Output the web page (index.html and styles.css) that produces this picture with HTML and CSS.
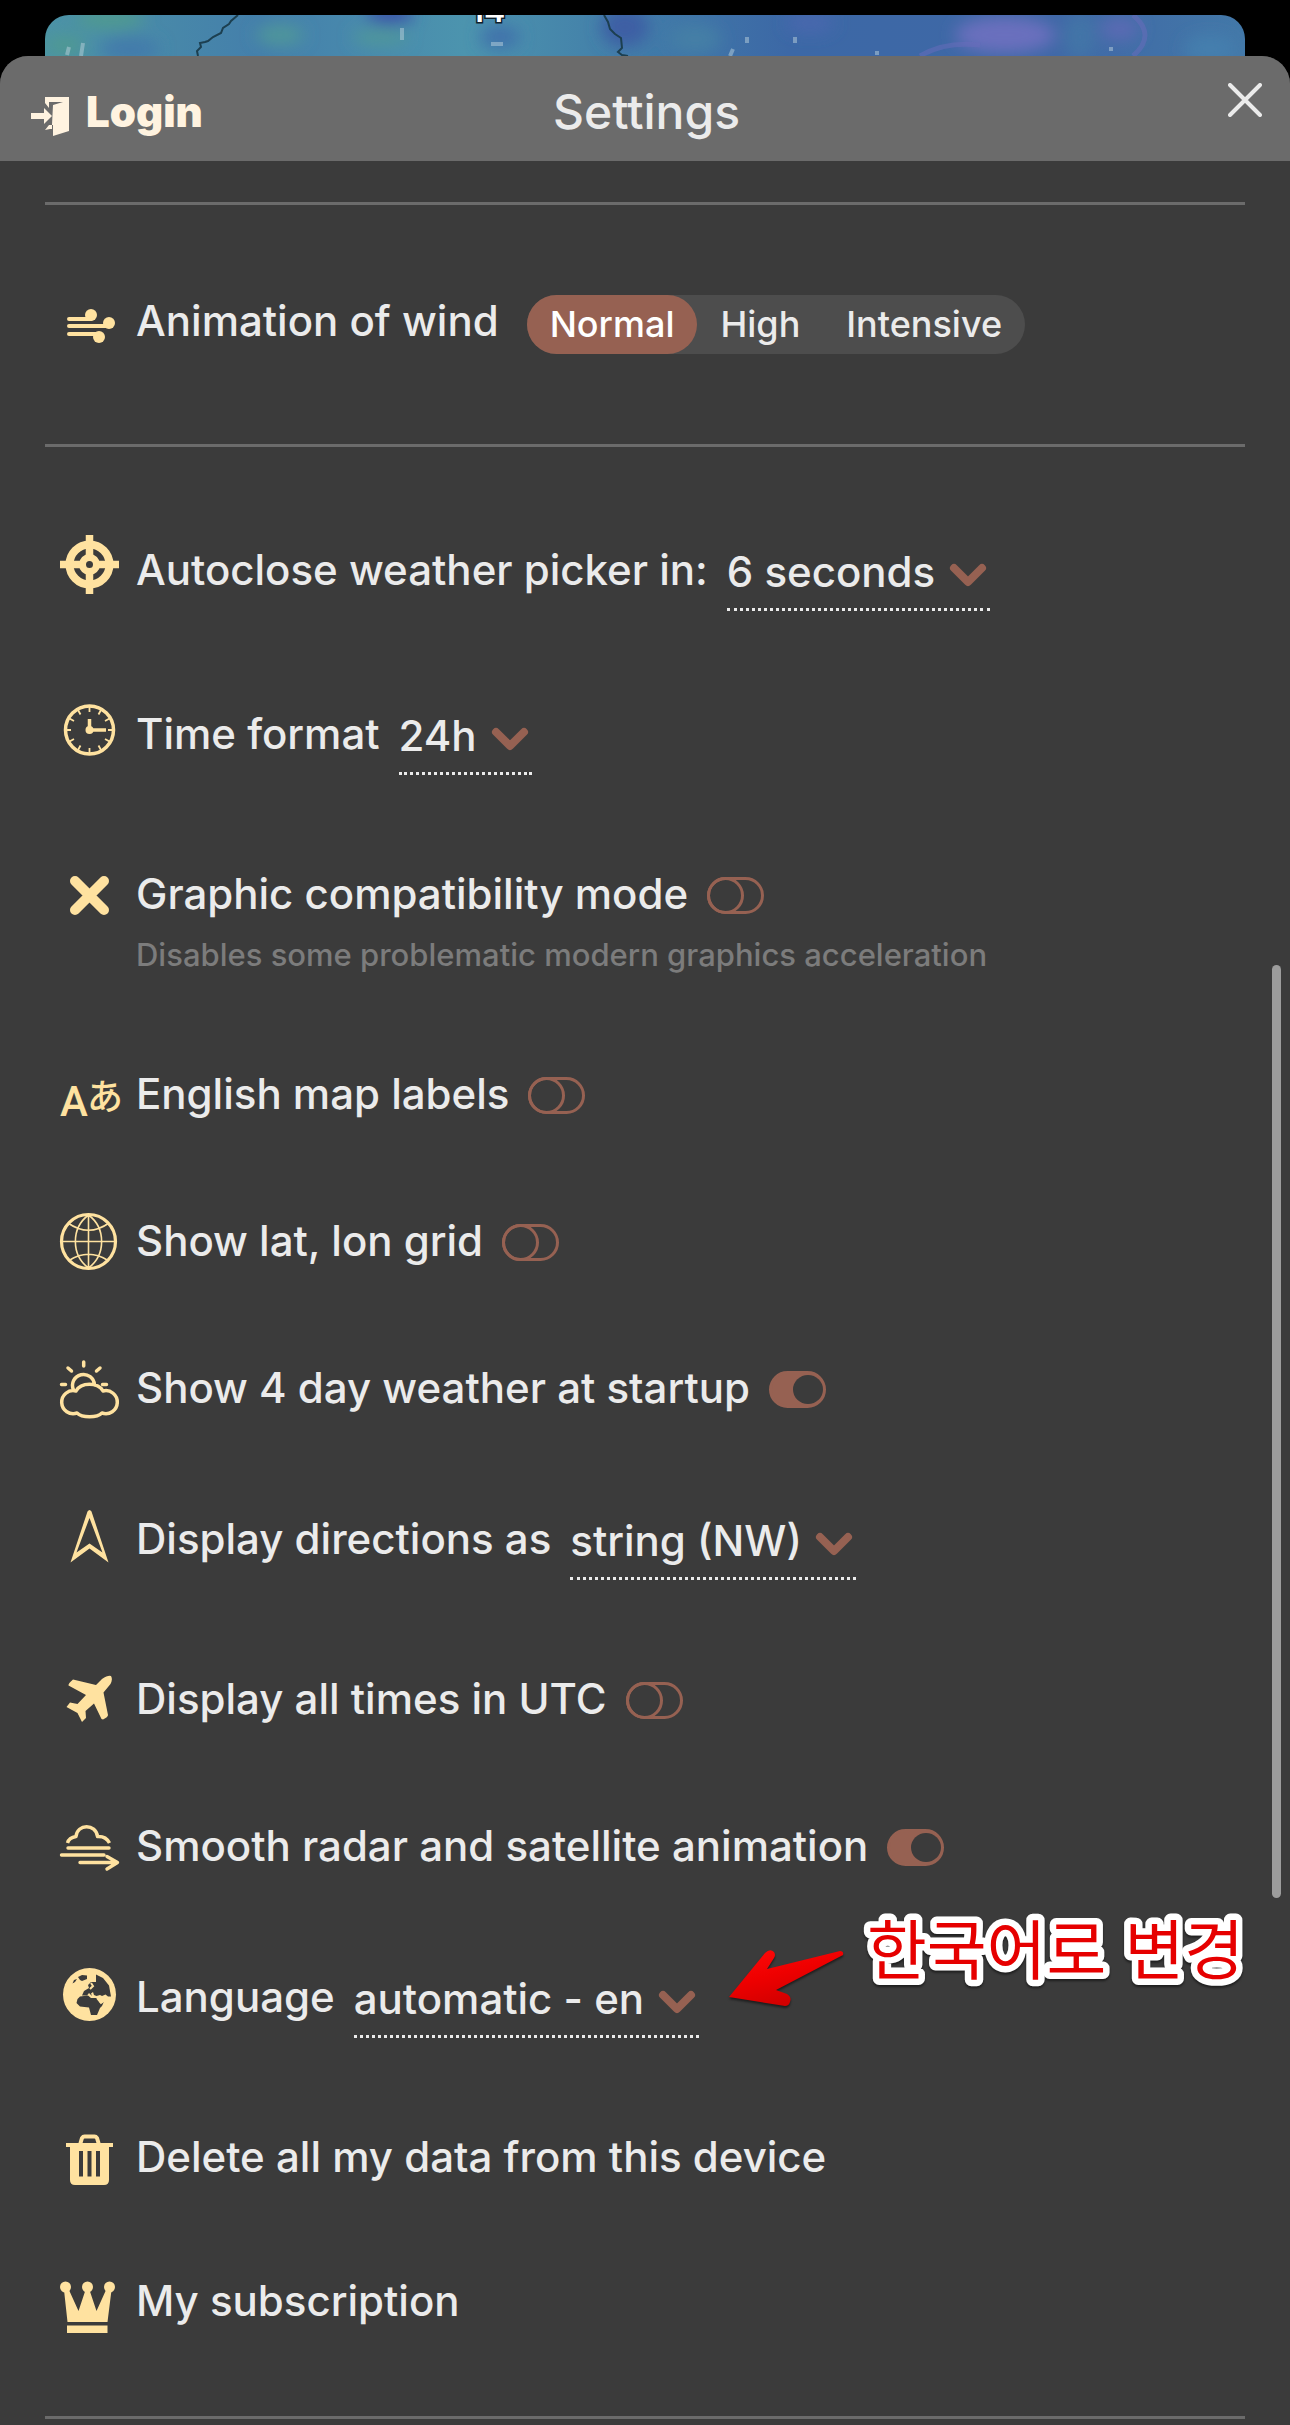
FILE: index.html
```html
<!DOCTYPE html>
<html lang="en">
<head>
  <meta charset="UTF-8">
  <meta name="viewport" content="width=device-width, initial-scale=1.0">
  <title>Settings</title>
  <link rel="stylesheet" href="styles.css">
</head>
<body>
  <div class="map">
    <svg viewBox="0 0 1200 41" preserveAspectRatio="xMidYMin slice" aria-hidden="true">
      <defs>
        <linearGradient id="sea">
          <stop offset="0" stop-color="#4c93a6"/>
          <stop offset="0.18" stop-color="#447fab"/>
          <stop offset="0.35" stop-color="#4c94ae"/>
          <stop offset="0.5" stop-color="#417ba8"/>
          <stop offset="0.62" stop-color="#3c68a6"/>
          <stop offset="0.85" stop-color="#3f68a6"/>
          <stop offset="1" stop-color="#4378a8"/>
        </linearGradient>
        <filter id="soft" x="-50%" y="-50%" width="200%" height="200%">
          <feGaussianBlur stdDeviation="8"/>
        </filter>
      </defs>
      <rect width="1200" height="41" fill="url(#sea)"/>
      <g filter="url(#soft)">
        <ellipse cx="65" cy="4" rx="35" ry="10" fill="#4f9a90"/>
        <ellipse cx="20" cy="30" rx="20" ry="9" fill="#4f9a90"/>
        <ellipse cx="85" cy="34" rx="30" ry="12" fill="#427aab"/>
        <ellipse cx="235" cy="20" rx="24" ry="10" fill="#4f979a"/>
        <ellipse cx="345" cy="0" rx="24" ry="9" fill="#3a50a8"/>
        <ellipse cx="335" cy="22" rx="28" ry="8" fill="#4f979a"/>
        <ellipse cx="455" cy="22" rx="20" ry="12" fill="#4172ab"/>
        <ellipse cx="580" cy="12" rx="24" ry="20" fill="#3d5ea4"/>
        <ellipse cx="650" cy="24" rx="26" ry="14" fill="#447fa6"/>
        <ellipse cx="765" cy="8" rx="24" ry="10" fill="#4868ae"/>
        <ellipse cx="960" cy="20" rx="50" ry="18" fill="#6a70be"/>
        <ellipse cx="1035" cy="22" rx="16" ry="24" fill="#4375a7"/>
        <ellipse cx="1075" cy="14" rx="20" ry="12" fill="#5a6ab4"/>
        <ellipse cx="1165" cy="34" rx="26" ry="14" fill="#447fae"/>
      </g>
      <path d="M875 41Q900 26 935 30M1088 0Q1112 20 1088 41" fill="none" stroke="#6a6cbb" stroke-width="5" opacity="0.5"/>
      <path d="M193 0L186 6L184 9L178 13L176 18L168 22L163 26L160 27L155 28L156 32L152 36L153 41M559 0L563 7L565 14L570 19L576 23L577 33L573 37L577 40L583 41" fill="none" stroke="#1c3f50" stroke-width="2"/>
      <path d="M38 28L36 41M24 32L22 40M357 13V25M458 29H446M702 22V28M750 22V28M688 34L685 41M832 36V40M1066 32V36" fill="none" stroke="#b9d0dc" stroke-width="4" opacity="0.5"/>
      <text class="map-value" x="443" y="7" text-anchor="middle">14</text>
    </svg>
  </div>

  <div class="panel">
    <header>
      <button class="login" type="button">
        <svg width="38" height="40" viewBox="0 0 38 40" aria-hidden="true">
          <path fill="currentColor" d="M14 0H38V34L22 39V28H18L14 33L19 32H21V28L22 8L32 5H18V11L14 6ZM0 16H13V11L21 19L13 27V22H0Z"/>
        </svg>
        <span>Login</span>
      </button>
      <h1>Settings</h1>
      <button class="close" type="button" aria-label="Close">
        <svg width="34" height="34" viewBox="0 0 34 34" aria-hidden="true">
          <path d="M2 2L32 32M32 2L2 32" stroke="currentColor" stroke-width="4" stroke-linecap="round"/>
        </svg>
      </button>
    </header>

    <main>
      <hr>
      <div class="row row-wind">
        <svg class="icon" viewBox="0 0 60 60" aria-hidden="true">
          <path class="line" d="M9 29H31M9 36H49M9 44H39" stroke-width="4"/>
          <circle cx="31" cy="25" r="6"/><circle cx="49" cy="33" r="6"/><circle cx="39" cy="47" r="6"/>
        </svg>
        <span class="label" id="windLabel">Animation of wind</span>
        <div class="segments" role="radiogroup" aria-labelledby="windLabel">
          <label><input type="radio" name="wind" checked><span>Normal</span></label>
          <label><input type="radio" name="wind"><span>High</span></label>
          <label><input type="radio" name="wind"><span>Intensive</span></label>
        </div>
      </div>
      <hr>

      <div class="row row-select">
        <svg class="icon" viewBox="0 0 60 60" aria-hidden="true">
          <circle class="line" cx="29.5" cy="29.5" r="20" stroke-width="8"/>
          <circle class="line" cx="29.5" cy="29.5" r="7" stroke-width="7"/>
          <path class="line butt" d="M29.5 0V24M29.5 35V59M0 29.5H24M35 29.5H59" stroke-width="7.5"/>
        </svg>
        <label class="label" for="autoclose">Autoclose weather picker in:</label>
        <div class="select">
          <select id="autoclose"><option>6 seconds</option></select>
          <svg viewBox="0 0 38 24" aria-hidden="true"><path d="M5 5L19 19L33 5"/></svg>
        </div>
      </div>

      <div class="row row-select">
        <svg class="icon" viewBox="0 0 60 60" aria-hidden="true">
          <circle class="line" cx="29.5" cy="31" r="24" stroke-width="3.5"/>
          <path class="line butt" stroke-width="1.8" d="M29.5 8V13M29.5 49V54M6 31H11M48 31H53M18 11L20.5 15.5M41 11L38.5 15.5M18 51L20.5 46.5M41 51L38.5 46.5M9.5 19.5L14 22M49.5 19.5L45 22M9.5 42.5L14 40M49.5 42.5L45 40"/>
          <path class="line butt" stroke-width="3.5" d="M29.5 31V20M29.5 31H46"/>
          <circle cx="29.5" cy="31" r="4"/>
        </svg>
        <label class="label" for="timeFormat">Time format</label>
        <div class="select">
          <select id="timeFormat"><option>24h</option></select>
          <svg viewBox="0 0 38 24" aria-hidden="true"><path d="M5 5L19 19L33 5"/></svg>
        </div>
      </div>

      <div class="row">
        <svg class="icon" viewBox="0 0 60 60" aria-hidden="true">
          <path class="line" d="M15 18L44 47M44 18L15 47" stroke-width="10"/>
        </svg>
        <div class="stack">
          <div class="line-top">
            <label class="label" for="compat">Graphic compatibility mode</label>
            <input class="toggle" type="checkbox" id="compat" aria-describedby="compatNote">
          </div>
          <p class="note" id="compatNote">Disables some problematic modern graphics acceleration</p>
        </div>
      </div>

      <div class="row">
        <svg class="icon" viewBox="0 0 60 60" aria-hidden="true">
          <text class="latin" x="0" y="53">A</text>
          <text class="kana" x="45" y="47" text-anchor="middle">あ</text>
        </svg>
        <label class="label" for="enLabels">English map labels</label>
        <input class="toggle" type="checkbox" id="enLabels">
      </div>

      <div class="row">
        <svg class="icon" viewBox="0 0 60 60" aria-hidden="true">
          <circle class="line" cx="28.5" cy="31.5" r="27" stroke-width="3.2"/>
          <path class="line butt" stroke-width="1.6" d="M28.5 4V59M1 31.5H56M8 13Q28.5 27.5 49 13M9 50.5Q28.5 38 48 50.5M28.5 5C11 18 11 45 28.5 58C46 45 46 18 28.5 5"/>
        </svg>
        <label class="label" for="grid">Show lat, lon grid</label>
        <input class="toggle" type="checkbox" id="grid">
      </div>

      <div class="row">
        <svg class="icon" viewBox="0 0 60 60" aria-hidden="true">
          <path class="line" stroke-width="3.5" d="M16 34A11.5 11.5 0 1 0 17 56C22 61 37 61 42 56A11.5 11.5 0 1 0 43 34C38 25 21 25 16 34M13.5 33A11 11 0 1 1 34.5 28M23.7 5V9M8 11L11.5 14M40 11L36.5 14M1.5 27.5H5.5M42.5 27.5H46.5"/>
        </svg>
        <label class="label" for="startup">Show 4 day weather at startup</label>
        <input class="toggle" type="checkbox" id="startup" checked>
      </div>

      <div class="row row-select">
        <svg class="icon" viewBox="0 0 60 60" aria-hidden="true">
          <path fill-rule="evenodd" d="M27.5 7.5Q29.5 4.500 31.5 7.5L48.5 58.5L29.5 44.5L10.5 58.5ZM29.5 14L16.500 48.500L29.5 39.5L42.500 48.500Z"/>
        </svg>
        <label class="label" for="directions">Display directions as</label>
        <div class="select">
          <select id="directions"><option>string (NW)</option></select>
          <svg viewBox="0 0 38 24" aria-hidden="true"><path d="M5 5L19 19L33 5"/></svg>
        </div>
      </div>

      <div class="row">
        <svg class="icon" viewBox="0 0 60 60" aria-hidden="true">
          <path d="M36 17L42 11Q48 7 51 8Q53 11 50.5 16L43.5 24.5L48 47Q48 49 43 51.5L41.5 51L34 35.5L25.5 43L26 50L22 54L17.5 45L6.5 39L10 34.5L17.5 36L26 27L8.5 17.5Q8 15.5 13 11.5Z"/>
        </svg>
        <label class="label" for="utc">Display all times in UTC</label>
        <input class="toggle" type="checkbox" id="utc">
      </div>

      <div class="row">
        <svg class="icon" viewBox="0 0 60 60" aria-hidden="true">
          <path class="line butt" stroke-width="3.4" d="M7.5 28Q9 22.5 16 21.5C17 8.5 36 8.5 37.5 21.5Q46 21 49.5 28"/>
          <path class="line" stroke-width="3.4" d="M8 33H49M1.5 40H44M20 47.5H57M47 41.5L57.5 47.5L47 54"/>
        </svg>
        <label class="label" for="smooth">Smooth radar and satellite animation</label>
        <input class="toggle" type="checkbox" id="smooth" checked>
      </div>

      <div class="row row-select row-language">
        <svg class="icon" viewBox="0 0 60 60" aria-hidden="true">
          <circle cx="29.5" cy="32.5" r="26.5"/>
          <path class="land" d="M36 12.5L43 16L49 23.5L51 34.5L48 34.5L45.5 32.5L42 34L40 33L36.5 34L34 33L33 30L31 31.5L32 34L29 31L27 33.5L22 33.5L24 29L29 26L28 23L31 20L36 20Z"/>
          <path class="land" d="M20 34.5L28 33.5L31 36L37 36L40 41L44 39.5L42 44L40 46L37 53L31 53L29 45.5L20 44.5L16.5 41L17.5 37ZM12.5 21.5L14 18L17 17L15 20ZM18 15L22 13L27 13.5L27 17L22 19L20 18Z"/>
          <path class="sea" d="M37 36L41 41L44 39M30 27L33 24L31 21"/>
        </svg>
        <label class="label" for="language">Language</label>
        <div class="select">
          <select id="language"><option>automatic - en</option></select>
          <svg viewBox="0 0 38 24" aria-hidden="true"><path d="M5 5L19 19L33 5"/></svg>
        </div>
        <svg class="callout" width="514" height="92" viewBox="0 0 514 92" lang="ko">
          <defs>
            <linearGradient id="red" x1="0" y1="0" x2="0.5" y2="1">
              <stop offset="0" stop-color="#ff0a0a"/>
              <stop offset="0.5" stop-color="#ef0000"/>
              <stop offset="1" stop-color="#cf0000"/>
            </linearGradient>
          </defs>
          <path fill="url(#red)" d="M1 78L37 34Q42 29 46 33Q48 36 46 39L39 50L112 32Q116 32 115 36L48 71L59 75Q64 78 62 83Q61 87 57 87Z"/>
          <text x="139" y="55">한국어로 변경</text>
        </svg>
      </div>

      <div class="row row-action">
        <svg class="icon" viewBox="0 0 60 60" aria-hidden="true">
          <path class="line" stroke-width="4" d="M20.5 17L22 12Q23 10.5 24.5 10.5H34.5Q36 10.5 37 12L38.5 17"/>
          <path fill-rule="evenodd" d="M6 17H53V21H49V54Q49 59 44 59H15Q10 59 10 54V21H6ZM19 25V50.5H23V25ZM27.5 25V50.5H31.5V25ZM36 25V50.5H40V25Z"/>
        </svg>
        <button class="label" type="button">Delete all my data from this device</button>
      </div>

      <div class="row row-action">
        <svg class="icon" viewBox="0 0 60 60" aria-hidden="true">
          <circle cx="5.5" cy="17" r="5.5"/><circle cx="27.5" cy="17" r="5.5"/><circle cx="49.5" cy="17" r="5.5"/>
          <path d="M4 20L9 20L18.5 41L25.5 20H29.5L36.5 41L46 20H51.5L47.5 52H7.5ZM7 55.5H47.5V63H7Z"/>
        </svg>
        <a class="label" href="#subscription">My subscription</a>
      </div>
      <hr>
    </main>
    <div class="scroll-thumb"></div>
  </div>
</body>
</html>
```
FILE: styles.css
```css
/* Page */
*, *::before {
  box-sizing: border-box;
}
body {
  margin: 0;
  min-height: 100vh;
  display: flex;
  flex-direction: column;
  background-color: #000;
  color: #ebebeb;
  font-family: Inter, "Liberation Sans", sans-serif;
  font-size: 42px;
  font-weight: 550;
  line-height: 51px;
}
button, select {
  font: inherit;
  color: inherit;
  background: none;
  border: none;
  margin: 0;
  padding: 0;
}

/* Strip of the map behind the panel */
.map {
  height: 41px;
  margin: 15px 45px 0;
  border-radius: 24px 24px 0 0;
  overflow: hidden;
}
.map svg {
  display: block;
  width: 100%;
  height: 100%;
}
.map-value {
  font-size: 32px;
  font-weight: 600;
  fill: #fff;
  stroke: #10202c;
  stroke-width: 3px;
  paint-order: stroke;
}

/* Panel */
.panel {
  position: relative;
  flex: 1;
  background-color: #3b3b3b;
  border-radius: 28px 28px 0 0;
}
header {
  display: grid;
  grid-template-columns: 1fr auto 1fr;
  align-items: center;
  height: 105px;
  padding: 5px 28px 0 31px;
  background-color: #6b6b6b;
  border-radius: 28px 28px 0 0;
}
h1 {
  margin: 0;
  font-size: 48px;
  font-weight: 500;
}
.login {
  justify-self: start;
  display: flex;
  align-items: center;
  gap: 17px;
  color: #fff3e0;
  font-weight: 900;
}
.login svg {
  margin-top: 12px;
}
.close {
  justify-self: end;
  align-self: start;
  padding-top: 22px;
  line-height: 0;
}

/* Rows */
main {
  padding: 41px 45px 0;
}
hr {
  height: 3px;
  margin: 45px 0;
  border: none;
  background-color: #6b6b6b;
}
hr:first-child {
  margin-top: 0;
}
hr:last-child {
  margin-bottom: 0;
}
.row {
  display: flex;
  align-items: flex-start;
  padding: 48px 15px;
}
.row-wind {
  padding-top: 45px;
  padding-bottom: 45px;
}
.row-select {
  padding-bottom: 45px;
}
.row-select .label {
  padding-top: 4px;
}
.row-action {
  padding-bottom: 45px;
}
.label {
  white-space: nowrap;
  color: inherit;
  text-decoration: none;
}
.line-top {
  display: flex;
}
.note {
  margin: 19px 0 0;
  color: #7c7c7c;
  font-size: 31px;
  line-height: 34px;
}

/* Icons */
.icon {
  flex: none;
  width: 60px;
  height: 60px;
  margin: -5px 16px -5px 0;
  overflow: visible;
  fill: #ffe2a0;
}
.icon .line {
  fill: none;
  stroke: #ffe2a0;
  stroke-linecap: round;
  stroke-linejoin: round;
}
.icon .butt {
  stroke-linecap: butt;
}
.icon .land {
  fill: #3b3b3b;
}
.icon .sea {
  fill: none;
  stroke: #ffe2a0;
  stroke-width: 2px;
}
.latin {
  font-family: Roboto, sans-serif;
  font-size: 42px;
  font-weight: 500;
}
.kana {
  font-family: "Noto Sans CJK JP", sans-serif;
  font-size: 36px;
  font-weight: 500;
}

/* Segmented switch */
.segments {
  display: flex;
  margin-left: 28px;
  border-radius: 30px;
  background-color: #4d4d4d;
  font-size: 36px;
  line-height: 59px;
}
.segments input {
  position: absolute;
  opacity: 0;
}
.segments span {
  display: block;
  padding: 0 23px;
  border-radius: 30px;
}
.segments input:checked + span {
  background-color: #966152;
  color: #fff;
}

/* Drop-downs */
.select {
  display: grid;
  align-items: start;
  margin-left: 19px;
  border-bottom: 3px dotted #ebebeb;
}
.select select {
  grid-area: 1 / 1;
  appearance: none;
  height: 68px;
  padding: 6px 54px 11px 0;
}
.select svg {
  grid-area: 1 / 1;
  justify-self: end;
  width: 38px;
  height: 24px;
  margin: 23px 3px 0 0;
  fill: none;
  stroke: #966152;
  stroke-width: 8px;
  stroke-linecap: round;
  stroke-linejoin: round;
  pointer-events: none;
}

/* Toggles */
.toggle {
  appearance: none;
  flex: none;
  display: flex;
  width: 57px;
  height: 37px;
  margin: 9px 0 0 19px;
  border: 3px solid #966152;
  border-radius: 19px;
}
.toggle::before {
  content: "";
  flex: none;
  width: 37px;
  height: 37px;
  margin: -3px;
  border: 3px solid #966152;
  border-radius: 50%;
}
.toggle:checked {
  justify-content: flex-end;
  background-color: #966152;
}
.toggle:checked::before {
  width: 30px;
  height: 29px;
  margin: 1px 0;
  border: none;
  background-color: #3b3b3b;
}

/* Note pointing at the language drop-down */
.row-language {
  position: relative;
}
.callout {
  position: absolute;
  top: 0;
  right: 3px;
  overflow: visible;
  filter: drop-shadow(0 2px 1px rgba(0, 0, 0, 0.5));
}
.callout text {
  font-family: "Noto Sans CJK KR", sans-serif;
  font-size: 65px;
  font-weight: 400;
  fill: #e60000;
  stroke: #fff;
  stroke-width: 13px;
  stroke-linejoin: round;
  paint-order: stroke;
}

/* Scroll position */
.scroll-thumb {
  position: absolute;
  top: 909px;
  right: 9px;
  width: 9px;
  height: 933px;
  border-radius: 5px;
  background-color: #9c9c9c;
}
```
